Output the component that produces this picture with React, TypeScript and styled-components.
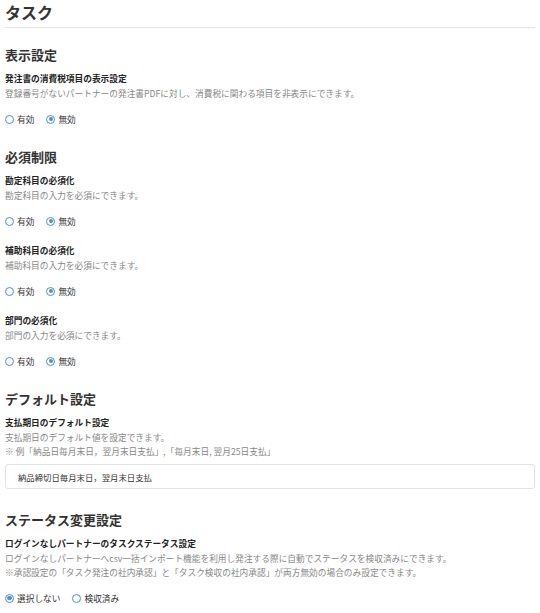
import { FC } from "react"
import styled, { createGlobalStyle } from "styled-components"

const GlobalStyle = createGlobalStyle`
    body{
        margin:0;
        background:#fff;
        font-family:"Noto Sans CJK JP", "Noto Sans", sans-serif;
        color:#333;
    }
`

const Page = styled.div`
    padding:0 5px;
`

const PageTitle = styled.h1`
    margin:0;
    font-size:16px;
    line-height:24px;
    font-weight:700;
    color:#333;
`

const Divider = styled.hr`
    margin:3px 0 0;
    border:none;
    border-top:1px solid #e2e2e2;
`

const Section = styled.section`
    margin-top:17px;
    & + &{
        margin-top:21px;
    }
`

const SectionTitle = styled.h2`
    margin:0 0 7px;
    font-size:13px;
    line-height:20px;
    font-weight:700;
    color:#333;
`

const Item = styled.div`
    & + &{
        margin-top:16px;
    }
`

const ItemTitle = styled.h3`
    margin:0 0 1px;
    font-size:8.7px;
    line-height:14px;
    font-weight:700;
    color:#222;
`

const Description = styled.p`
    margin:0;
    font-size:8.7px;
    line-height:14px;
    color:#888;
`

const RadioGroup = styled.div`
    display:flex;
    align-items:center;
    margin-top:11px;
    height:14px;
`

const RadioOption = styled.label`
    display:flex;
    align-items:center;
    column-gap:3px;
    margin-right:12px;
    font-size:8.7px;
    color:#333;
`

const RadioCircle = styled.span<{ $checked: boolean }>`
    box-sizing:border-box;
    width:9px;
    height:9px;
    border-radius:50%;
    border:1.4px solid #4a8fe2;
    display:flex;
    align-items:center;
    justify-content:center;
    &::after{
        content:'';
        width:4.5px;
        height:4.5px;
        border-radius:50%;
        background:${({ $checked }) => ($checked ? '#4a8fe2' : 'transparent')};
    }
`

const ValueBox = styled.div`
    margin-top:5px;
    height:25px;
    box-sizing:border-box;
    border:1px solid #dde3e6;
    border-radius:3px;
    padding:0 12px;
    display:flex;
    align-items:center;
    font-size:8.4px;
    color:#333;
`

interface RadioProps {
    options: string[]
    selected: number
}

const Radios: FC<RadioProps> = ({ options, selected }) => (
    <RadioGroup>
        {options.map((option, index) => (
            <RadioOption key={option}>
                <RadioCircle $checked={index === selected} />
                {option}
            </RadioOption>
        ))}
    </RadioGroup>
)

const onOff = ['有効', '無効']

const requiredItems = [
    { title: '勘定科目の必須化', text: '勘定科目の入力を必須にできます。' },
    { title: '補助科目の必須化', text: '補助科目の入力を必須にできます。' },
    { title: '部門の必須化', text: '部門の入力を必須にできます。' },
]

const App: FC = () => {
    return (
        <Page>
            <GlobalStyle />
            <PageTitle>タスク</PageTitle>
            <Divider />

            <Section>
                <SectionTitle>表示設定</SectionTitle>
                <Item>
                    <ItemTitle>発注書の消費税項目の表示設定</ItemTitle>
                    <Description>登録番号がないパートナーの発注書PDFに対し、消費税に関わる項目を非表示にできます。</Description>
                    <Radios options={onOff} selected={1} />
                </Item>
            </Section>

            <Section>
                <SectionTitle>必須制限</SectionTitle>
                {requiredItems.map((item) => (
                    <Item key={item.title}>
                        <ItemTitle>{item.title}</ItemTitle>
                        <Description>{item.text}</Description>
                        <Radios options={onOff} selected={1} />
                    </Item>
                ))}
            </Section>

            <Section>
                <SectionTitle>デフォルト設定</SectionTitle>
                <Item>
                    <ItemTitle>支払期日のデフォルト設定</ItemTitle>
                    <Description>
                        支払期日のデフォルト値を設定できます。
                        <br />
                        ※ 例「納品日毎月末日，翌月末日支払」,「毎月末日, 翌月25日支払」
                    </Description>
                    <ValueBox>納品締切日毎月末日，翌月末日支払</ValueBox>
                </Item>
            </Section>

            <Section>
                <SectionTitle>ステータス変更設定</SectionTitle>
                <Item>
                    <ItemTitle>ログインなしパートナーのタスクステータス設定</ItemTitle>
                    <Description>
                        ログインなしパートナーへcsv一括インポート機能を利用し発注する際に自動でステータスを検収済みにできます。
                        <br />
                        ※承認設定の「タスク発注の社内承認」と「タスク検収の社内承認」が両方無効の場合のみ設定できます。
                    </Description>
                    <Radios options={['選択しない', '検収済み']} selected={0} />
                </Item>
            </Section>
        </Page>
    )
}

export default App
